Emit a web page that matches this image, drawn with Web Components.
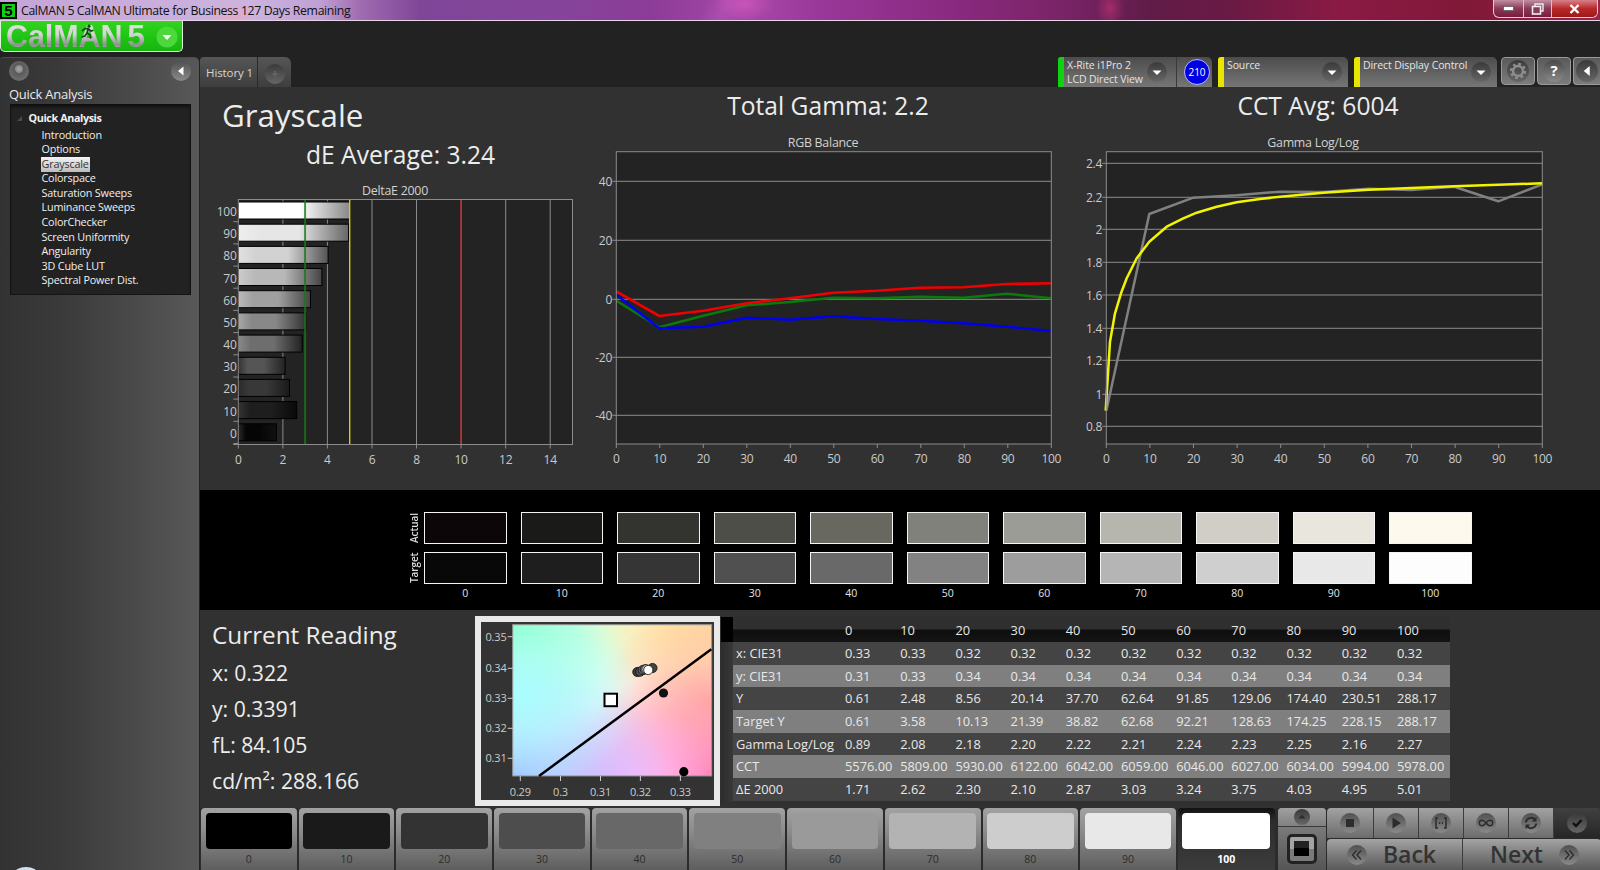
<!DOCTYPE html>
<html><head><meta charset="utf-8"><title>CalMAN</title>
<style>
html,body{margin:0;width:1600px;height:870px;overflow:hidden;background:#222;font-family:"Open Sans","Noto Sans",sans-serif;color:#ddd}
</style></head><body>
<title-bar>CalMAN 5 CalMAN Ultimate for Business 127 Days Remaining</title-bar>
<cal-app>
  <side-column slot="side">
    <logo-button></logo-button>
    <side-panel heading="Quick Analysis">
      <tree-item root>Quick Analysis</tree-item>
      <tree-item>Introduction</tree-item>
      <tree-item>Options</tree-item>
      <tree-item selected>Grayscale</tree-item>
      <tree-item>Colorspace</tree-item>
      <tree-item>Saturation Sweeps</tree-item>
      <tree-item>Luminance Sweeps</tree-item>
      <tree-item>ColorChecker</tree-item>
      <tree-item>Screen Uniformity</tree-item>
      <tree-item>Angularity</tree-item>
      <tree-item>3D Cube LUT</tree-item>
      <tree-item>Spectral Power Dist.</tree-item>
    </side-panel>
  </side-column>
  <top-bar slot="top">
    <history-tabs>History 1</history-tabs>
    <device-tools>
      <device-chip color="#12d012" w="154" badge="210"><span>X-Rite i1Pro 2</span><br><span>LCD Direct View</span></device-chip>
      <device-chip color="#e6e600" w="130">Source</device-chip>
      <device-chip color="#e6e600" w="143">Direct Display Control</device-chip>
      <tool-button kind="gear"></tool-button>
      <tool-button kind="help"></tool-button>
      <tool-button kind="back"></tool-button>
    </device-tools>
  </top-bar>
  <results-charts slot="main"></results-charts>
  <swatch-strip slot="main"></swatch-strip>
  <reading-row slot="main">
    <reading-panel></reading-panel>
    <cie-chart></cie-chart>
    <data-table></data-table>
  </reading-row>
  <patch-bar slot="main"></patch-bar>
</cal-app>
<script>
const NS=[0,10,20,30,40,50,60,70,80,90,100];
function def(name,css,render){
  customElements.define(name,class extends HTMLElement{
    connectedCallback(){
      if(this.shadowRoot)return;
      const r=this.attachShadow({mode:'open'});
      r.innerHTML='<style>'+css+'</style>'+(typeof render==='function'?render(this):render);
    }
  });
}
const roundBtn=(inner,size=20,dark)=>`<svg width="${size}" height="${size}" viewBox="0 0 20 20" style="display:block;flex:none"><defs><linearGradient id="rb" x1="0" y1="0" x2="0" y2="1"><stop offset="0" stop-color="${dark?'#3a3a3a':'#505050'}"/><stop offset="1" stop-color="${dark?'#666':'#8a8a8a'}"/></linearGradient></defs><circle cx="10" cy="10" r="10" fill="url(#rb)"/>${inner}</svg>`;

def('title-bar',`
:host{display:flex;align-items:center;height:20px;border-bottom:1px solid #e6d4e6;box-sizing:content-box;position:relative;
background:
 radial-gradient(ellipse 26px 14px at 232px 16px,#e8a8c0cc,transparent),
 radial-gradient(ellipse 30px 16px at 745px 4px,#d858c0aa,transparent),
 radial-gradient(ellipse 14px 20px at 1110px 8px,#b03070cc,transparent),
 linear-gradient(115deg,transparent 44%,#c060c055 45.2%,transparent 47%),
 linear-gradient(90deg,#c4a4d6 0,#ccb4de 250px,#c0a0d4 320px,#a06cb0 360px,#7f4698 420px,#85449a 560px,#8c3c98 650px,#a848a8 745px,#9a389a 820px,#8a2a80 950px,#7a2468 1060px,#601c48 1150px,#6a1a44 1230px,#8a1a44 1340px,#801838 1470px,#9a2448 1600px);
font:12.3px "Open Sans",sans-serif;color:#111;letter-spacing:-.37px}
.ic{width:17px;height:17px;margin:0 4px 0 0;background:#14d014;border:2px solid #000;box-sizing:border-box;display:flex;align-items:center;justify-content:center;font:bold 15px "Liberation Sans",sans-serif;color:#000;line-height:1;letter-spacing:0}
.t{flex:1;white-space:nowrap}
.w{align-self:flex-start;display:flex;width:105px;height:18px;margin-right:2px;box-sizing:border-box;border:1px solid #e0cdd4;border-top:0;border-radius:0 0 6px 6px;overflow:hidden;background:linear-gradient(#c28ea4,#8a3a58 50%,#781c3c)}
.w div{display:flex;align-items:center;justify-content:center;border-right:1px solid #d8c0c8}
.w div:nth-child(1){width:29px}.w div:nth-child(2){width:27px}
.w div:nth-child(3){flex:1;border:0;background:linear-gradient(#d8808a,#b82a2a 50%,#a01818)}
`,()=>`<div class="ic">5</div><div class="t"><slot></slot></div>
<div class="w"><div><svg width="11" height="5"><rect x=".5" y=".5" width="10" height="4" fill="#fff" stroke="#444" stroke-width=".6"/></svg></div>
<div><svg width="13" height="12" viewBox="0 0 13 12"><rect x="4" y="1" width="8" height="7" fill="none" stroke="#eee" stroke-width="1.4"/><rect x="1.5" y="3.5" width="8" height="7.5" fill="#8a3a58" stroke="#eee" stroke-width="1.6"/></svg></div>
<div><svg width="11" height="10" viewBox="0 0 11 10"><path d="M1.5 1 9.5 9M9.5 1 1.5 9" stroke="#fff" stroke-width="2.4"/></svg></div></div>`);

def('cal-app',`
:host{display:grid;grid-template-columns:200px 1400px;grid-template-rows:66px 783px;height:849px}
.s{grid-row:1/3;display:block}
.t{grid-column:2}
.m{grid-column:2;background:#313131;display:flex;flex-direction:column;min-height:0}
`,`<div class="s"><slot name="side"></slot></div><div class="t"><slot name="top"></slot></div><div class="m"><slot name="main"></slot></div>`);

def('side-column',`:host{display:flex;flex-direction:column;height:849px}`,`<slot></slot>`);

def('logo-button',`
:host{display:block;position:relative;width:183px;height:31px;box-sizing:border-box;border:1px solid #dff5dc;border-top:0;border-radius:0 0 5px 5px;background:linear-gradient(#34d420,#1ec414 55%,#18b40e);flex:none}
.n{position:absolute;left:5px;top:-1px;font:bold 30.5px/32px "Liberation Sans",sans-serif;white-space:nowrap;background:linear-gradient(#e4e4e4,#d4d4d4 45%,#8e8e8e 78%,#d0d0d0);-webkit-background-clip:text;background-clip:text;color:transparent;letter-spacing:-.1px}
.n b{margin-left:5px;font-size:32px}
.run{position:absolute;left:79px;top:3px}
.d{position:absolute;left:155px;top:5px}
`,()=>`<div class="n">CalMAN<b>5</b></div>
<svg class="run" width="15" height="15" viewBox="0 0 15 15"><circle cx="9" cy="2.2" r="1.6" fill="#0d4a0d"/><path d="M2 7 5 4.6h3.2L7 9l3 2 .5 3.5M7 9l-2 3-3.500 1M8.300 5l2.700 2 2.500-.7" fill="none" stroke="#0d4a0d" stroke-width="1.7"/></svg>
<svg class="d" width="22" height="22" viewBox="0 0 22 22"><circle cx="11" cy="11" r="10.500" fill="#4cd83c"/><path d="M6.500 9h9L11 14z" fill="#fff"/></svg>`);

def('side-panel',`
:host{display:block;flex:1;margin:5px 1px 0 0;background:linear-gradient(90deg,#323232,#3a3a3a 30%,#585858);border-radius:4px 5px 0 0;border-top:1px solid #4c4c4c;box-sizing:border-box;position:relative}
.tb{display:flex;justify-content:space-between;padding:3px 8px 0 9px;height:21px}
h2{margin:3px 0 0 9px;font:400 13px/19px "Open Sans",sans-serif;color:#eaeaea;letter-spacing:-.25px}
.box{margin:0 8px 0 9.500px;background:#222;box-shadow:inset 0 3px 3px #111,inset 0 0 0 1px #151515;padding:7px 0 7px;height:191px;box-sizing:border-box}
.orb{position:absolute;left:14px;bottom:-11px;width:24px;height:14px;border-radius:50%;background:#cfe0f0}
`,h=>`<div class="tb">
<svg width="20" height="20" viewBox="0 0 20 20"><defs><radialGradient id="o" cx=".5" cy=".4" r=".5"><stop offset="0" stop-color="#aaa"/><stop offset=".35" stop-color="#8a8a8a"/><stop offset=".45" stop-color="#5a5a5a"/><stop offset="1" stop-color="#6a6a6a"/></radialGradient></defs><circle cx="10" cy="10" r="10" fill="url(#o)"/></svg>
${roundBtn('<path d="M12.500 5.500v9L7 10z" fill="#fff"/>')}</div>
<h2>${h.getAttribute('heading')}</h2><div class="box"><slot></slot></div>
<div class="orb"></div>`);

def('tree-item',`
:host{display:block;height:14.6px;padding-left:32px;font:10.8px/14.6px "Open Sans",sans-serif;color:#f0f0f0;letter-spacing:-.18px;white-space:nowrap}
:host([root]){height:16.500px;padding-left:19px;font-weight:700;position:relative;letter-spacing:-.4px}
:host([root])::before{content:"";position:absolute;left:7px;top:5px;border-left:5px solid transparent;border-bottom:5px solid #4a4a4a}
:host([selected]) span{background:linear-gradient(#f4f4f4,#bcbcbc);color:#333;margin-left:-1px;padding:0 1px 1px;display:inline-block;line-height:14px;height:14px}
`,`<span><slot></slot></span>`);

def('top-bar',`:host{display:flex;height:66px;align-items:flex-end;justify-content:space-between}`,`<slot></slot>`);

def('history-tabs',`
:host{display:flex;height:30px;font:11.5px/32px "Open Sans",sans-serif;color:#d6d6d6}
.a{width:58px;padding-left:6px;box-sizing:border-box;background:linear-gradient(#565656,#3e3e3e);border-radius:4px 0 0 0;border-right:1px solid #2a2a2a;white-space:nowrap;letter-spacing:-.1px}
.b{width:33px;background:linear-gradient(#565656,#3e3e3e);border-radius:0 6px 0 0;display:flex;align-items:center;justify-content:center;padding-top:3px;box-sizing:border-box}
span{display:block;position:relative}
`,`<div class="a"><slot></slot></div><div class="b">${roundBtn('<path d="M7 10h6M10 7v6" stroke="#6c6c6c" stroke-width="1.200"/>',20,true).replace(/rb/g,'tb')}</div>`);

def('device-tools',`:host{display:flex;align-items:flex-start;height:30px;margin-left:-1px}`,`<slot></slot>`);

def('device-chip',`
:host{display:flex;height:30px;box-sizing:border-box;margin-right:6px;background:linear-gradient(#4c4c4c,#767676);border-radius:3px 5px 0 0;position:relative;flex:none;font:10.5px/14px "Open Sans",sans-serif;color:#e4e4e4;letter-spacing:-.1px;white-space:nowrap}
:host(:nth-of-type(3)){margin-right:4px}
.st{width:6px;border-radius:3px 0 0 0;flex:none}
.tx{flex:1;padding:1px 0 0 3px;min-width:0}
.dd{align-self:center;margin:0 6px 0 0;flex:none}
.dd.ba{margin-right:9px}
.sep{width:1px;background:#3a3a3a;margin-right:7px;flex:none}
.bd{width:26px;height:26px;border-radius:50%;background:#0000e6;border:1px solid #b8b8ff;box-sizing:border-box;font:10px/24px "Open Sans",sans-serif;color:#fff;text-align:center;margin:2px 2px 0 0;flex:none;letter-spacing:0}
`,h=>{
 const b=h.getAttribute('badge');
 h.style.width=h.getAttribute('w')+'px';
 return `<div class="st" style="background:${h.getAttribute('color')}"></div><div class="tx"><slot></slot></div>
 <div class="dd ${b?'ba':''}">${roundBtn('<path d="M5.500 8.500h9L10 13z" fill="#fff"/>',20,true)}</div>${b?`<div class="sep"></div><div class="bd">${b}</div>`:''}`});

def('tool-button',`
:host{display:flex;width:34px;height:28px;align-items:center;justify-content:center;box-sizing:border-box;border:1px solid #9a9a9a;border-radius:4px;background:linear-gradient(#5a5a5a,#7c7c7c);margin-right:2px;flex:none;font:bold 15px "Open Sans",sans-serif;color:#fff}
:host([kind=back]){width:27px;margin:0;border-right:0;border-radius:4px 0 0 4px}
`,h=>{
 const k=h.getAttribute('kind');
 const inner={gear:'<circle cx="10" cy="10" r="4.500" fill="none" stroke="#8e8e8e" stroke-width="2.200"/><circle cx="10" cy="10" r="6.300" fill="none" stroke="#8e8e8e" stroke-width="2.200" stroke-dasharray="2.500 2.450"/>',
 back:'<path d="M12.500 5.500v9L7 10z" fill="#fff"/>',help:''}[k];
 if(k==='help')return `<div style="width:22px;height:22px;border-radius:50%;background:linear-gradient(#4a4a4a,#8a8a8a);text-align:center;line-height:21px">?</div>`;
 return roundBtn(inner,22,true);
});

const X=(o,z)=>(o+z/3).toFixed(1);
function polyline(pts,ox,oy,color,w){return `<polyline fill="none" stroke="${color}" stroke-width="${w}" stroke-linejoin="round" points="${pts.map(p=>X(ox,p[0])+','+X(oy,p[1])).join(' ')}"/>`}
const AX='#8c8c8c';
const chartCss=`:host{display:block}svg{display:block}text{font:12px "Open Sans",sans-serif;fill:#cacaca;letter-spacing:-.25px}.tt{fill:#d2d2d2;font-size:12.4px}`;

function xAxis(l,r,b,step,labels,y){let s='';labels.forEach((t,i)=>{const x=+(l+i*step).toFixed(1);s+=`<line x1="${x}" x2="${x}" y1="${b}" y2="${b+4}" stroke="${AX}"/><text x="${x}" y="${y}" text-anchor="middle">${t}</text>`});return s}

def('delta-chart',chartCss,()=>{
 const L=238.3,R=572.5,T=199.5,B=444.5,U=22.28;
 const vals=[5.01,4.95,4.03,3.75,3.24,3.03,2.87,2.10,2.30,2.62,1.71];
 const cols=[[255,'#fff','#fff','#888'],[232,'#eee','#e6e6e6','#666'],[208,'#e0e0e0','#d2d2d2','#555'],[182,'#ccc','#b8b8b8','#444'],[155,'#bbb','#a0a0a0','#444'],[130,'#a8a8a8','#888','#333'],[104,'#8a8a8a','#6e6e6e','#222'],[80,'#333','#555','#222'],[50,'#2a2a2a','#383838','#1a1a1a'],[26,'#333','#1e1e1e','#0a0a0a'],[0,'#2a2a2a','#050505','#111']];
 let defs='',g='',bars='',lbl='';
 vals.forEach((v,i)=>{
  const y=202+i*22.18;
  defs+=`<linearGradient id="b${i}"><stop offset="0" stop-color="${cols[i][1]}"/><stop offset=".2" stop-color="${cols[i][2]}"/><stop offset=".55" stop-color="${cols[i][2]}"/><stop offset="1" stop-color="${cols[i][3]}"/></linearGradient>`;
  bars+=`<rect x="${L}" y="${y.toFixed(1)}" width="${(v*U).toFixed(1)}" height="17" fill="url(#b${i})" stroke="#000" stroke-width="1"/>`;
  lbl+=`<text x="236.500" y="${(y+14).toFixed(1)}" text-anchor="end">${100-i*10}</text>`;
  const ty=(y+19.700).toFixed(1);
  lbl+=`<line x1="${L-5}" x2="${L}" y1="${ty}" y2="${ty}" stroke="${AX}"/>`;
 });
 for(let i=1;i<8;i++){const x=(L+i*2*U).toFixed(1);g+=`<line x1="${x}" x2="${x}" y1="${T}" y2="${B}" stroke="#8a8a8a"/>`}
 const vl=(v,c,w,o=1)=>{const x=(L+v*U).toFixed(1);return `<line x1="${x}" x2="${x}" y1="${T}" y2="${B}" stroke="${c}" stroke-width="${w}" opacity="${o}"/>`};
 return `<svg width="390" height="290" viewBox="200 180 390 290"><defs>${defs}</defs>
 <text class="tt" x="395" y="194.500" text-anchor="middle">DeltaE 2000</text>
 <rect x="${L}" y="${T}" width="${R-L}" height="${B-T}" fill="#232323"/>${g}${bars}
 ${vl(3,'#167a16',2,.8)}${vl(5,'#d8d000',1.4)}${vl(10,'#cc2424',1.4)}
 <rect x="${L}" y="${T}" width="${R-L}" height="${B-T}" fill="none" stroke="${AX}"/>
 <line x1="${L-5}" x2="${L}" y1="${B}" y2="${B}" stroke="${AX}"/>
 ${lbl}${xAxis(L,R,B,2*U,[0,2,4,6,8,10,12,14],463.500)}</svg>`;
});

def('balance-chart',chartCss,()=>{
 const L=616.3,R=1051.3,T=151.7,B=444;
 const ys=[[40,181.3],[20,240.3],[0,299.3],[-20,357.3],[-40,415.3]];
 let g='';ys.forEach(([t,y])=>{g+=`<line x1="${L}" x2="${R}" y1="${y}" y2="${y}" stroke="#8c8c8c"/><line x1="${L-4}" x2="${L}" y1="${y}" y2="${y}" stroke="${AX}"/><text x="612" y="${y+4.300}" text-anchor="end">${t}</text>`});
 const red=[[79,484],[208,558],[340,542],[470,520],[600,505],[730,488],[860,482],[990,473],[1120,472],[1250,462],[1384,460]];
 const grn=[[79,512],[208,592],[340,557],[470,526],[600,516],[730,503],[860,505],[990,500],[1120,503],[1250,491],[1384,505]];
 const blu=[[79,494],[208,595],[340,590],[470,563],[600,569],[730,559],[860,567],[990,572],[1120,580],[1250,590],[1384,603]];
 return `<svg width="476" height="340" viewBox="590 130 476 340">
 <text class="tt" x="823" y="146.500" text-anchor="middle">RGB Balance</text>
 <rect x="${L}" y="${T}" width="${R-L}" height="${B-T}" fill="#232323"/>${g}
 ${polyline(grn,590,130,'#0a7a0a',2.5)}${polyline(blu,590,130,'#0000f0',2.4)}${polyline(red,590,130,'#f00000',2.6)}
 <rect x="${L}" y="${T}" width="${R-L}" height="${B-T}" fill="none" stroke="${AX}"/>
 ${xAxis(L,R,B,43.5,NS,462.500)}</svg>`;
});

def('gamma-chart',chartCss,()=>{
 const L=1106.3,R=1542.3,T=151.7,B=444;
 const ys=[['2.4',163.3],['2.2',197.3],['2',229.3],['1.8',262.3],['1.6',295],['1.4',328.3],['1.2',360.3],['1',394.3],['0.8',426.3]];
 let g='';ys.forEach(([t,y])=>{g+=`<line x1="${L}" x2="${R}" y1="${y}" y2="${y}" stroke="#8c8c8c"/><line x1="${L-4}" x2="${L}" y1="${y}" y2="${y}" stroke="${AX}"/><text x="1102" y="${y+4.800}" text-anchor="end">${t}</text>`});
 const gray=[[139,842],[268,252],[400,203],[530,196],[660,185],[790,186],[925,176],[1054,180],[1183,170],[1315,214],[1447,163]];
 const yel=[[137,842],[150,635],[165,550],[183,490],[200,445],[230,385],[268,335],[320,290],[370,265],[410,248],[470,230],[530,217],[600,207],[660,200],[790,188],[925,179],[1054,174],[1183,169],[1315,164],[1447,160]];
 return `<svg width="504" height="340" viewBox="1066 130 504 340">
 <text class="tt" x="1313" y="146.500" text-anchor="middle">Gamma Log/Log</text>
 <rect x="${L}" y="${T}" width="${R-L}" height="${B-T}" fill="#232323"/>${g}
 ${polyline(gray,1060,130,'#808080',2.5)}${polyline(yel,1060,130,'#f4f400',2.5)}
 <rect x="${L}" y="${T}" width="${R-L}" height="${B-T}" fill="none" stroke="${AX}"/>
 ${xAxis(L,R,B,43.6,NS,462.500)}</svg>`;
});

def('results-charts',`
:host{display:flex;height:403px;flex:none;color:#ececec}
.c{display:flex;flex-direction:column;flex:none}
.a{width:390px}.b{width:476px}.d{width:504px}
h1,h2{margin:0;font-weight:400;white-space:nowrap}
h1{font-size:31.300px;line-height:44px;margin:6px 0 0 22px;height:45px}
h2{font-size:24.600px;line-height:34px}
.a h2{margin:0 0 8px 106px}
.b h2,.d h2{text-align:center;margin:2px 0 7px}
`,`<div class="c a"><h1>Grayscale</h1><h2>dE Average: 3.24</h2><delta-chart></delta-chart></div>
<div class="c b"><h2>Total Gamma: 2.2</h2><balance-chart></balance-chart></div>
<div class="c d"><h2>CCT Avg: 6004</h2><gamma-chart></gamma-chart></div>`);

def('swatch-strip',`
:host{display:grid;height:120px;flex:none;background:#000;box-sizing:border-box;padding:22px 0 0 208px;grid-template-columns:16px repeat(11,96.500px);grid-template-rows:32px 32px 14px;row-gap:8px;align-items:stretch}
.s{width:82.500px;box-sizing:border-box;border:1px solid #f4f4f4}
.v{writing-mode:vertical-rl;transform:rotate(180deg);font:600 10px/12px "Open Sans",sans-serif;color:#ddd;text-align:center;width:12px;letter-spacing:-.1px}
.l{width:82.500px;text-align:center;font:10.500px/14px "Open Sans",sans-serif;color:#e4e4e4;margin-top:-6px}
`,()=>{
 const a=['#0c0608','#1a1a18','#33332f','#4e4e49','#686760','#81817c','#9c9c97','#b6b5ae','#d0cec6','#e9e7dd','#fdf9ed'];
 const t=['#080808','#1e1e1e','#353535','#505050','#696969','#828282','#9d9d9d','#b5b5b5','#cfcfcf','#e8e8e8','#fdfdfd'];
 const row=(n,c)=>`<div class="v">${n}</div>`+c.map(x=>`<div class="s" style="background:${x}"></div>`).join('');
 return row('Actual',a)+row('Target',t)+'<div></div>'+NS.map(n=>`<div class="l">${n}</div>`).join('');
});

def('reading-row',`:host{display:flex;height:198px;flex:none}`,`<slot></slot>`);

def('reading-panel',`
:host{display:block;width:275px;flex:none;box-sizing:border-box;padding:7px 0 0 12px;color:#ececec;white-space:nowrap}
h2{margin:0 0 2px;font:400 24.300px/36px "Open Sans",sans-serif}
p{margin:0;font:400 21.200px/36px "Open Sans",sans-serif}
`,`<h2>Current Reading</h2><p>x: 0.322</p><p>y: 0.3391</p><p>fL: 84.105</p><p>cd/m²: 288.166</p>`);

def('cie-chart',`
:host{display:block;width:245px;height:190px;margin-top:6px;box-sizing:border-box;border:6px solid #e9e9e9;background:#333;flex:none}
svg{display:block}
text{font:11px "Open Sans",sans-serif;fill:#ccc;letter-spacing:-.2px}
`,()=>{
 const L=512.7,R=711.7,T=624.7,B=776;
 const ys=[['0.35',636.7],['0.34',668.3],['0.33',698.3],['0.32',728.3],['0.31',758.3]];
 const xs=[['0.29',520.3],['0.3',560.5],['0.31',600.5],['0.32',640.4],['0.33',680.4]];
 let t='';
 ys.forEach(([s,y])=>t+=`<line x1="${L-5}" x2="${L}" y1="${y}" y2="${y}" stroke="#ccc"/><text x="506.500" y="${y+4}" text-anchor="end">${s}</text>`);
 xs.forEach(([s,x])=>t+=`<line x1="${x}" x2="${x}" y1="${B}" y2="${B+5}" stroke="#ccc"/><text x="${x}" y="${B+19.500}" text-anchor="middle">${s}</text>`);
 const blobs=[['tl',0,0,'#86ffc0',.75],['top',.82,0,'#fff2a8',.5],['tr',1,0,'#ffd8a0',.55],['r',1,.5,'#ffb8a0',.6],['br',1,1,'#ff80b0',.75],['bm',.55,1,'#ffb8ff',.5],['bl',0,1,'#a0c0ff',.8],['lm',0,.45,'#a8ffff',.65]];
 let d='',r='';
 blobs.forEach(([id,x,y,c,rad])=>{d+=`<radialGradient id="${id}" cx="${x}" cy="${y}" r="${rad}"><stop offset="0" stop-color="${c}"/><stop offset="1" stop-color="${c}" stop-opacity="0"/></radialGradient>`;r+=`<rect x="${L}" y="${T}" width="${R-L}" height="${B-T}" fill="url(#${id})"/>`});
 const cl=[[1270,186,'#3c3c3c'],[1278,185,'#4c4c4c'],[1286,180,'#666'],[1292,178,'#888'],[1314,174,'#444'],[1296,178,'#bbb'],[1302,180,'#fff']];
 const dots=cl.map(([x,y,c])=>`<circle cx="${(200+x/2.904).toFixed(1)}" cy="${(610+y/3).toFixed(1)}" r="4.600" fill="${c}" stroke="#111" stroke-width=".8"/>`).join('');
 return `<svg width="233" height="178" viewBox="481 622 233 178"><defs>${d}</defs>
 <rect x="${L}" y="${T}" width="${R-L}" height="${B-T}" fill="#fff"/>${r}
 <rect x="${L}" y="${T}" width="${R-L}" height="${B-T}" fill="none" stroke="#8a8a8a"/>
 <line x1="539" y1="776" x2="711.300" y2="649.300" stroke="#000" stroke-width="2.500"/>
 <rect x="604.500" y="693.700" width="12.500" height="12.500" fill="#fff" stroke="#000" stroke-width="2"/>
 <circle cx="663.500" cy="693" r="4.600" fill="#111"/><circle cx="683.800" cy="771.700" r="4.600"/>${dots}${t}</svg>`;
});

def('data-table',`
:host{display:block;margin:7px 0 0 1px;width:729px;flex:none;font:12.8px "Open Sans",sans-serif;color:#e8e8e8;letter-spacing:.01px}
.r{display:grid;grid-template-columns:12px 112px repeat(10,55.200px) 53px;height:22.700px;line-height:23.500px;white-space:nowrap}
.r>div{overflow:visible}
.h{height:25px;line-height:26px;background:linear-gradient(#2f2f2f 0,#2f2f2f 48%,#0e0e0e 52%,#141414);color:#e6e6e6}
.h .g{background:#000}
.a{background:#444}.b{background:#7f7f7f}
.g{background:linear-gradient(90deg,#2c2c2c,#383838)}
.n{padding-left:3px}
`,()=>{
 const d=[
 ['x: CIE31','0.33 0.33 0.32 0.32 0.32 0.32 0.32 0.32 0.32 0.32 0.32'],
 ['y: CIE31','0.31 0.33 0.34 0.34 0.34 0.34 0.34 0.34 0.34 0.34 0.34'],
 ['Y','0.61 2.48 8.56 20.14 37.70 62.64 91.85 129.06 174.40 230.51 288.17'],
 ['Target Y','0.61 3.58 10.13 21.39 38.82 62.68 92.21 128.63 174.25 228.15 288.17'],
 ['Gamma Log/Log','0.89 2.08 2.18 2.20 2.22 2.21 2.24 2.23 2.25 2.16 2.27'],
 ['CCT','5576.00 5809.00 5930.00 6122.00 6042.00 6059.00 6046.00 6027.00 6034.00 5994.00 5978.00'],
 ['ΔE 2000','1.71 2.62 2.30 2.10 2.87 3.03 3.24 3.75 4.03 4.95 5.01']];
 const cell=s=>`<div>${s}</div>`;
 return `<div class="r h"><div class="g"></div><div></div>${NS.map(cell).join('')}</div>`+
 d.map((r,i)=>`<div class="r ${i%2?'b':'a'}"><div class="g"></div><div class="n">${r[0]}</div>${r[1].split(' ').map(cell).join('')}</div>`).join('');
});

def('patch-bar',`
:host{display:flex;height:62px;flex:none;gap:2px;padding-left:1px;background:#2b2b2b}
.p{width:95.700px;flex:none;box-sizing:border-box;padding:5px 4.500px 0;border-radius:4px 4px 0 0;background:linear-gradient(#a2a2a2,#8a8a8a 40%,#5e5e5e);text-align:center;font:10.500px/20px "Open Sans",sans-serif;color:#2c2c2c}
.p i{display:block;height:36px;border-radius:4px}
.p.on{background:linear-gradient(#111,#2c2c2c 20%,#3c3c3c);color:#fff;font-weight:700;width:97px}
.sc{width:48px;margin-left:1px;flex:none;display:flex;flex-direction:column;background:#777;border-radius:4px 4px 0 0;overflow:hidden}
.up{height:18px;background:linear-gradient(#a0a0a0,#808080);display:flex;align-items:center;justify-content:center;border-bottom:1px solid #3a3a3a}
.bg{flex:1;background:linear-gradient(#7a7a7a,#555);display:flex;align-items:center;justify-content:center}
.bx{width:30px;height:30px;box-sizing:border-box;border:3px solid #222;border-radius:5px;background:linear-gradient(#a4a4a4 50%,#7a7a7a 50%);display:flex;align-items:center;justify-content:center}
.bx b{display:block;width:15px;height:15px;background:linear-gradient(#222 50%,#000 50%)}
.tr{width:274px;flex:none;margin-left:-1px;display:flex;flex-direction:column}
.t1{display:grid;grid-template-columns:47px 45px 45px 45px 45px 47px;height:30px}
.t1>div{display:flex;align-items:center;justify-content:center;background:linear-gradient(#a2a2a2,#6c6c6c);border-right:1px solid #3c3c3c;box-sizing:border-box;border-radius:0}
.t1>div:first-child{border-radius:4px 0 0 0}
.t1>div:last-child{background:linear-gradient(#404040,#262626);border:0;border-radius:0 4px 0 0}
.t2{display:grid;grid-template-columns:136px 138px;height:31px;margin-top:1px}
.t2>div{display:flex;align-items:center;background:linear-gradient(#a4a4a4,#808080 45%,#5a5a5a);font:600 23px/31px "Open Sans",sans-serif;color:#333;box-sizing:border-box}
.bk{border-right:1px solid #3c3c3c;padding-left:20px;border-radius:4px 0 0 0}
.bk span{margin-left:16px}
.nx{padding-left:27px;justify-content:flex-start;border-radius:0 4px 0 0}
.nx span{margin-right:16px}
`,()=>{
 const c=['#000','#1a1a1a','#333','#4d4d4d','#686868','#808080','#9a9a9a','#b3b3b3','#cdcdcd','#e8e8e8','#fff'];
 const ic=s=>roundBtn(s,20,false).replace(/rb/g,'rr');
 const stroke='fill="none" stroke="#2c2c2c"';
 const b1=[
  '<rect x="6" y="6" width="8" height="8" fill="#2c2c2c"/>',
  '<path d="M6.500 4.500v11L15 10z" fill="#2c2c2c"/>',
  `<path d="M7 5H5v10h2M13 5h2v10h-2" ${stroke} stroke-width="1.500"/><path d="M8 10h1.200M10.800 10H12" ${stroke} stroke-width="2"/>`,
  `<path d="M10 10c-1.500-2-2.500-2.700-4-2.700a2.700 2.700 0 0 0 0 5.400c1.500 0 2.500-.7 4-2.700s2.500-2.700 4-2.700a2.700 2.700 0 0 1 0 5.400c-1.500 0-2.500-.7-4-2.700z" ${stroke} stroke-width="1.400"/>`,
  `<path d="M4.800 9.500A5.200 5.200 0 0 1 14 6.800M15.200 10.500A5.200 5.200 0 0 1 6 13.200" ${stroke} stroke-width="2"/><path d="M15.500 3.800v4.700h-4.700zM4.500 16.200v-4.700h4.700z" fill="#2c2c2c"/>`
 ];
 const chk=roundBtn('<path d="M6 10l3 3 5.500-6" fill="none" stroke="#111" stroke-width="2.400"/>',20,true).replace(/rb/g,'rc');
 const chev=d=>roundBtn(`<path d="${d}" fill="none" stroke="#2c2c2c" stroke-width="1.300"/>`,20,false);
 return NS.map((n,i)=>`<div class="p ${i==10?'on':''}"><i style="background:${c[i]}"></i>${n}</div>`).join('')+
 `<div class="sc"><div class="up">${roundBtn('<path d="M5.500 12h9L10 7z" fill="#2c2c2c"/>',16,true).replace(/rb/g,'ru')}</div><div class="bg"><div class="bx"><b></b></div></div></div>
 <div class="tr"><div class="t1">${b1.map((s,i)=>`<div>${ic(s).replace(/rr/g,'rr'+i)}</div>`).join('')}<div>${chk}</div></div>
 <div class="t2"><div class="bk">${chev('M9.500 5.500 5.500 10l4 4.500M14 5.500 10 10l4 4.500').replace(/rb/g,'rk')}<span>Back</span></div><div class="nx"><span>Next</span>${chev('M10.500 5.500 14.500 10l-4 4.500M6 5.500 10 10l-4 4.500').replace(/rb/g,'rn')}</div></div></div>`;
});
</script>
</body></html>
